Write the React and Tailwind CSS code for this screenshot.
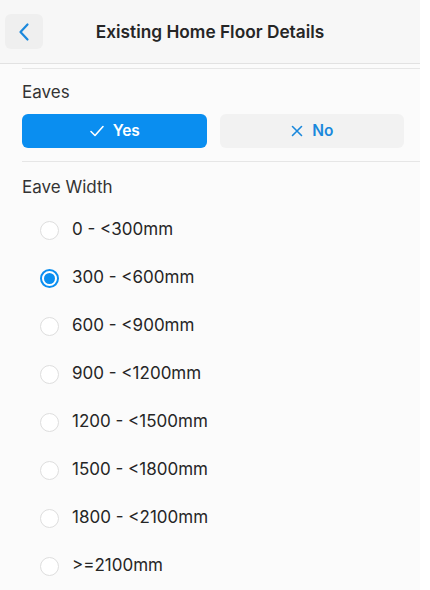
import React, { useState } from "react";

const options = [
  "0 - <300mm",
  "300 - <600mm",
  "600 - <900mm",
  "900 - <1200mm",
  "1200 - <1500mm",
  "1500 - <1800mm",
  "1800 - <2100mm",
  ">=2100mm",
];

const App = () => {
  const [eaves, setEaves] = useState(true);
  const [width, setWidth] = useState(1);

  return (
    <div className="min-h-[590px] w-[430px] bg-white font-['Inter',sans-serif]">
      <div className="w-[420px] min-h-[590px] bg-[#fbfbfb]">
        {/* Header */}
        <div className="relative flex items-center h-[64px] bg-[#f7f7f7] border-b border-[#e2e2e2] pl-[5px]">
          <button className="flex items-center justify-center w-[38px] h-[35px] rounded-md bg-[#efefef]">
            <svg width="14" height="20" viewBox="0 0 14 20" fill="none">
              <path d="M10.5 2.5 L3.5 10 L10.5 17.5" stroke="#1a88dc" strokeWidth="2.2" strokeLinecap="round" strokeLinejoin="round" />
            </svg>
          </button>
          <h1 className="absolute left-0 right-0 text-center text-[17.3px] font-semibold text-[#262626] pointer-events-none">
            Existing Home Floor Details
          </h1>
        </div>

        <div className="ml-[22px] mt-[4px] border-t border-[#e6e6e6]" />

        {/* Eaves */}
        <div className="pl-[22px] pt-[13px]">
          <p className="text-[17px] text-[#333] leading-5">Eaves</p>
          <div className="flex gap-[13px] mt-[12px] pr-[16px]">
            <button
              onClick={() => setEaves(true)}
              className={`flex-1 h-[34px] rounded-md flex items-center justify-center gap-2 text-[15.5px] font-semibold ${eaves ? "bg-[#0a8ef0] text-white" : "bg-[#f2f2f2] text-[#1a88dc]"}`}
            >
              <svg width="16" height="14" viewBox="0 0 16 14" fill="none">
                <path d="M2 7.5 L6 11.5 L14 2.5" stroke="currentColor" strokeWidth="1.6" strokeLinecap="round" strokeLinejoin="round" />
              </svg>
              Yes
            </button>
            <button
              onClick={() => setEaves(false)}
              className={`flex-1 h-[34px] rounded-md flex items-center justify-center gap-2 text-[15.5px] font-semibold ${!eaves ? "bg-[#0a8ef0] text-white" : "bg-[#f2f2f2] text-[#1a88dc]"}`}
            >
              <svg width="14" height="14" viewBox="0 0 14 14" fill="none">
                <path d="M2.5 2.5 L11.5 11.5 M11.5 2.5 L2.5 11.5" stroke="currentColor" strokeWidth="1.6" strokeLinecap="round" />
              </svg>
              No
            </button>
          </div>
          <div className="mt-[13px] border-t border-[#e6e6e6]" />
        </div>

        {/* Eave Width */}
        <div className="pl-[22px] pt-[15px]">
          <p className="text-[17px] text-[#333] leading-5">Eave Width</p>
          <div className="mt-[9px] pl-[18px] flex flex-col">
            {options.map((opt, i) => (
              <button
                key={opt}
                onClick={() => setWidth(i)}
                className="flex items-center gap-[13px] h-[48px] text-left"
              >
                {width === i ? (
                  <span className="w-[19px] h-[19px] rounded-full border-2 border-[#0a8ef0] flex items-center justify-center bg-white">
                    <span className="w-[11px] h-[11px] rounded-full bg-[#0a8ef0]" />
                  </span>
                ) : (
                  <span className="w-[19px] h-[19px] rounded-full border-[1.5px] border-[#dedede] bg-white" />
                )}
                <span className="text-[17px] text-[#262626]">{opt}</span>
              </button>
            ))}
          </div>
        </div>
      </div>
    </div>
  );
};

export default App;
